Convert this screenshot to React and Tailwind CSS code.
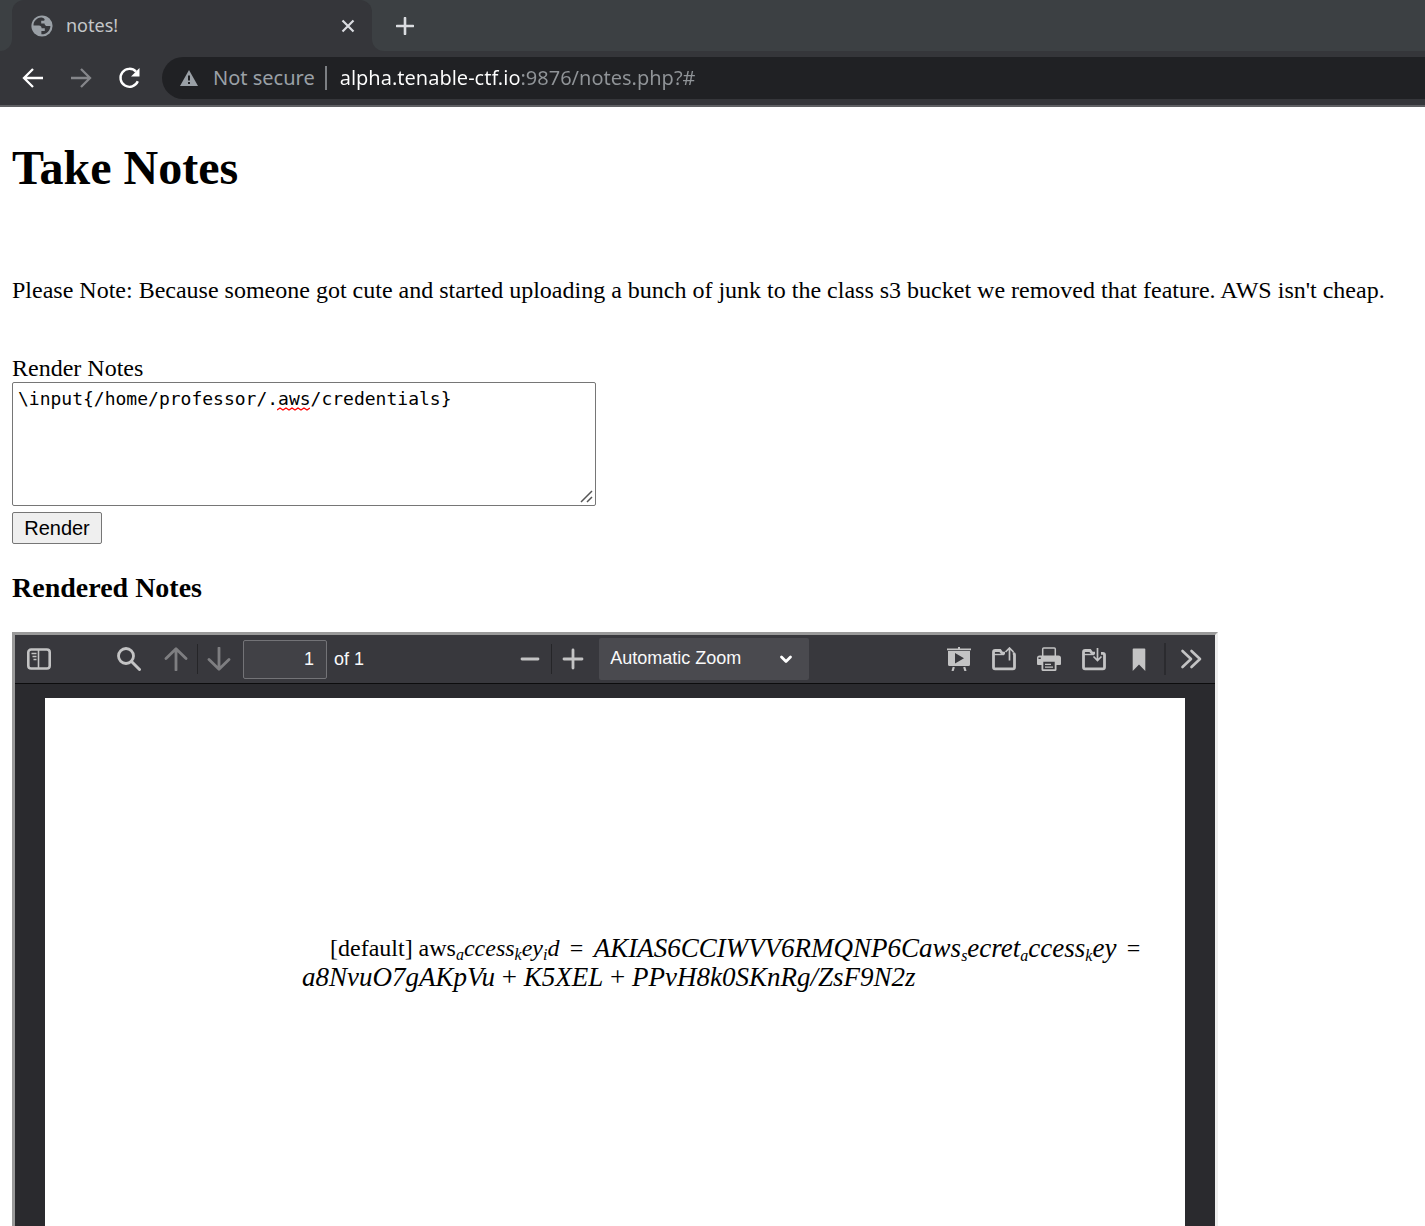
import React from "react";

const Svg = ({ size = 24, box = "0 0 24 24", className = "", children }) => (
  <svg width={size} height={size} viewBox={box} fill="none" className={className} aria-hidden="true">
    {children}
  </svg>
);

function TabStrip() {
  return (
    <div className="flex h-[51px] bg-[#3c4043]">
      <div className="w-3 bg-[#35363a]">
        <div className="h-full rounded-br-xl bg-[#3c4043]" />
      </div>
      <div className="flex w-[360px] items-center rounded-t-xl bg-[#35363a] pr-3 pl-[19px]">
        <Svg size={22} box="0 0 22 22">
          <circle cx="11" cy="11" r="10.6" fill="#9aa0a6" />
          <path
            d="M10 2.6C5.400 3 2.500 6.600 2.500 10.600L8 10.600c1.500 0 2.600 1.100 2.600 2.600h3.200v2.700h-3.400v3.400c4.800.2 8.900-3.400 9-8.300h-3.200c-1.500 0-2.700-1.100-2.700-2.600h-3.300V5.700h2.600c.8 0 1.100-1.200.6-1.700-.7-.8-2-1.400-3.400-1.400Z"
            fill="#35363a"
          />
          <path d="M3.400 12.500c.5 3 2.600 5.300 5.300 6.300v-2.700c-1.400 0-2.500-.9-2.500-2.200Z" fill="#9aa0a6" />
        </Svg>
        <span className="ml-[13px] flex-1 pb-[2px] text-lg text-[#c4c7c9]">notes!</span>
        <button aria-label="Close tab" className="flex h-6 w-6 items-center justify-center">
          <Svg size={14} box="0 0 14 14">
            <path d="M1.500 1.500 12.500 12.500M12.500 1.500 1.500 12.500" stroke="#dadce0" strokeWidth="2.200" />
          </Svg>
        </button>
      </div>
      <div className="flex flex-1 bg-[#35363a]">
        <div className="flex flex-1 items-center rounded-bl-xl bg-[#3c4043] pl-[21px]">
          <button aria-label="New tab" className="flex h-6 w-6 items-center justify-center">
            <Svg size={18} box="0 0 18 18">
              <path d="M9 1v16M1 9h16" stroke="#dadce0" strokeWidth="2.600" strokeLinecap="round" />
            </Svg>
          </button>
        </div>
      </div>
    </div>
  );
}

function AddressBar() {
  return (
    <div className="flex h-14 items-center border-b-2 border-[#5f6063] bg-[#35363a] pl-[21px]">
      <button aria-label="Back" className="flex h-6 w-6 items-center justify-center">
        <Svg>
          <path d="M22 12H3.500M12 3 3 12l9 9" stroke="#fff" strokeWidth="2.300" />
        </Svg>
      </button>
      <button aria-label="Forward" className="ml-6 flex h-6 w-6 items-center justify-center">
        <Svg>
          <path d="M2 12h18.500M12 3l9 9-9 9" stroke="#85868a" strokeWidth="2.300" />
        </Svg>
      </button>
      <button aria-label="Reload" className="ml-6 flex h-6 w-6 items-center justify-center">
        <Svg>
          <path d="M20.800 15.300a9 9 0 1 1-1.800-9.700" stroke="#fff" strokeWidth="2.400" />
          <path d="M22.500 2v8.500H14Z" fill="#fff" />
        </Svg>
      </button>
      <div className="ml-[21px] flex h-[42px] flex-1 items-center rounded-l-full bg-[#202124] pl-[18px]">
        <Svg size={18} box="0 0 18 18">
          <path d="M9 1 18 17H0Z" fill="#9aa0a6" />
          <path d="M8 6.500h2v5H8ZM8 13h2v2H8Z" fill="#202124" />
        </Svg>
        <span className="ml-[15px] text-xl text-[#9aa0a6]">Not secure</span>
        <span className="ml-[10px] h-6 w-[2px] bg-[#7c7f83]" />
        <input
          aria-label="Address"
          defaultValue="alpha.tenable-ctf.io:9876/notes.php?#"
          spellCheck={false}
          className="ml-[13px] min-w-0 flex-1 bg-[linear-gradient(90deg,#fff_180px,#909498_180px)] bg-clip-text text-xl text-transparent outline-none"
        />
      </div>
    </div>
  );
}

function ToolButton({ label, className = "", children }) {
  return (
    <button aria-label={label} className={`flex h-[42px] w-[42px] shrink-0 items-center justify-center text-[#c3c3c4] ${className}`}>
      <Svg>{children}</Svg>
    </button>
  );
}

function ViewerToolbar() {
  return (
    <div className="flex h-[49px] items-center justify-between border-b border-[#0c0c0d] bg-[#38383d] px-[3px] font-['Liberation_Sans',sans-serif] text-lg text-[#f9f9fa]">
      <div className="flex items-center pr-4">
        <ToolButton label="Toggle sidebar">
          <rect x="1.300" y="2.500" width="21.400" height="19" rx="2.800" stroke="currentColor" strokeWidth="2.600" />
          <path d="M11.500 3v18" stroke="currentColor" strokeWidth="1.600" />
          <path d="M4.500 6.500h5M5.500 9.500h4M6.500 12.500h3" stroke="currentColor" strokeWidth="1.300" />
        </ToolButton>
        <ToolButton label="Find" className="ml-12">
          <circle cx="9" cy="9" r="7.500" stroke="currentColor" strokeWidth="2.800" />
          <path d="m14.500 14.500 8 8" stroke="currentColor" strokeWidth="3" strokeLinecap="round" />
        </ToolButton>
        <ToolButton label="Previous page" className="ml-[5px] opacity-50">
          <path d="M12 23V2M2 11.500 12 1.700l10 9.800" stroke="currentColor" strokeWidth="2.800" strokeLinecap="round" strokeLinejoin="round" />
        </ToolButton>
        <span className="h-[30px] w-px bg-[#252528]" />
        <ToolButton label="Next page" className="opacity-50">
          <path d="M12 1v21M2 12.500l10 9.800 10-9.800" stroke="currentColor" strokeWidth="2.800" strokeLinecap="round" strokeLinejoin="round" />
        </ToolButton>
        <input
          id="page-number"
          aria-label="Page"
          defaultValue="1"
          className="ml-[3px] h-[39px] w-[84px] rounded-xs border border-[#737377] bg-[#414146] pr-3 text-right outline-none"
        />
        <label htmlFor="page-number" className="ml-[7px] pb-px">of 1</label>
      </div>

      <div className="flex items-center">
        <ToolButton label="Zoom out">
          <path d="M4 12h16" stroke="currentColor" strokeWidth="2.800" strokeLinecap="round" />
        </ToolButton>
        <span className="h-[30px] w-px bg-[#252528]" />
        <ToolButton label="Zoom in">
          <path d="M12 3v18M3 12h18" stroke="currentColor" strokeWidth="2.800" strokeLinecap="round" />
        </ToolButton>
        <div className="relative ml-[5px]">
          <select aria-label="Zoom" className="block h-[42px] w-[210px] appearance-none rounded-xs bg-[#4a4a4f] pr-10 pb-[2px] pl-[11px] outline-none">
            <option>Automatic Zoom</option>
          </select>
          <Svg size={14} box="0 0 14 14" className="pointer-events-none absolute top-[14px] right-4">
            <path d="m2.500 5 4.500 4.500L11.500 5" stroke="#fff" strokeWidth="2.800" strokeLinecap="round" strokeLinejoin="round" />
          </Svg>
        </div>
      </div>

      <div className="flex items-center gap-[3px]">
        <ToolButton label="Presentation mode">
          <path fill="currentColor" d="M11 0h2v1.500h11V4h-1v13.500q0 1.500-1.500 1.500h-19Q1 19 1 17.500V4H0V1.500h11Z" />
          <path fill="#38383d" d="M0 3.200h24v.9H0ZM8 6v10.500l9-5.300Z" />
          <path d="m6.800 20-1.300 4M17.200 20l1.300 4" stroke="currentColor" strokeWidth="2.200" />
        </ToolButton>
        <ToolButton label="Open file">
          <path d="M13 6.200h-3L8 3.500H3.200q-1.700 0-1.700 1.700v15q0 1.600 1.700 1.600h17.600q1.700 0 1.700-1.600V8q0-1.700-1.700-1.700H21" stroke="currentColor" strokeWidth="2.800" />
          <path d="M2 7.500h10" stroke="currentColor" strokeWidth="1.400" />
          <path d="M17.500 13.500V1.500M13.500 5l4-4 4 4" stroke="currentColor" strokeWidth="1.700" />
        </ToolButton>
        <ToolButton label="Print">
          <path fill="currentColor" d="M2.500 8.500h19Q24 8.500 24 11v6q0 1-1 1h-3.500v4.500q0 1.500-1.500 1.500H6q-1.500 0-1.500-1.500V18H1q-1 0-1-1v-6q0-2.500 2.500-2.500Z" />
          <path d="M5.700 9V2q0-1 1-1h10.600q1 0 1 1v7" stroke="currentColor" strokeWidth="1.500" />
          <path fill="#38383d" d="M1.500 10.500h2.300V12H1.500ZM6.300 14.700h11.400v7.600H6.300Z" />
          <path d="M8 17.300h6M8 20.200h8" stroke="currentColor" strokeWidth="1.300" />
        </ToolButton>
        <ToolButton label="Save">
          <path d="M13 6.200h-3L8 3.500H3.200q-1.700 0-1.700 1.700v15q0 1.600 1.700 1.600h17.600q1.700 0 1.700-1.600V8q0-1.700-1.700-1.700H19" stroke="currentColor" strokeWidth="2.800" />
          <path d="M2 7.500h10" stroke="currentColor" strokeWidth="1.400" />
          <path d="M15.500 1v12M11.500 9.500l4 4 4-4" stroke="currentColor" strokeWidth="1.700" />
        </ToolButton>
        <ToolButton label="Bookmark">
          <path fill="currentColor" d="M6.500 1.500h11q.8 0 .8.8V24L12 17.500 5.700 24V2.300q0-.8.8-.8Z" />
        </ToolButton>
        <span className="mx-px h-8 w-[2px] bg-[#2b2b2f]" />
        <ToolButton label="Tools">
          <path d="m3.500 4 8.500 8-8.500 8M12.500 4l8.500 8-8.500 8" stroke="currentColor" strokeWidth="2.600" strokeLinecap="round" strokeLinejoin="round" />
        </ToolButton>
      </div>
    </div>
  );
}

const Sub = ({ children }) => <span className="relative top-1 text-base">{children}</span>;

function Viewer() {
  return (
    <section className="flex w-[86.1%] flex-1 flex-col border-3 border-b-0 border-t-[#9a9a9a] border-r-[#eeeeee] border-l-[#9a9a9a]">
      <ViewerToolbar />
      <div className="flex flex-1 bg-[#2a2a2e] px-[30px] pt-[14px]">
        <div className="flex-1 bg-white pt-[237px] pr-[45px] pl-[257px] text-2xl leading-[27px]">
          <p className="flex justify-between pl-7 whitespace-nowrap">
            <span>[default] aws<i><Sub>a</Sub>ccess<Sub>k</Sub>ey<Sub>i</Sub>d</i></span>
            <span>=</span>
            <i className="text-[27px]">AKIAS6CCIWVV6RMQNP6Caws<Sub>s</Sub>ecret<Sub>a</Sub>ccess<Sub>k</Sub>ey</i>
            <span>=</span>
          </p>
          <p className="text-[27px] whitespace-nowrap">
            <i>a8NvuO7gAKpVu</i> + <i>K5XEL</i> + <i>PPvH8k0SKnRg/ZsF9N2z</i>
          </p>
        </div>
      </div>
    </section>
  );
}

export default function App() {
  return (
    <div className="flex min-h-screen flex-col bg-white font-['Liberation_Serif',serif] text-black">
      <header className="font-['Noto_Sans','Open_Sans',sans-serif]">
        <TabStrip />
        <AddressBar />
      </header>
      <main className="flex flex-1 flex-col items-start px-3 pt-[33px] text-2xl leading-7">
        <h1 className="text-5xl leading-[56px] font-bold">Take Notes</h1>
        <p className="mt-20">
          Please Note: Because someone got cute and started uploading a bunch of junk to the class s3 bucket we removed that feature. AWS isn't cheap.
        </p>
        <form className="mt-[50px] flex flex-col items-start" onSubmit={(e) => e.preventDefault()}>
          <label htmlFor="notes">Render Notes</label>
          <div className="relative">
            <textarea
              id="notes"
              defaultValue="\input{/home/professor/.aws/credentials}"
              spellCheck={false}
              className="block h-[124px] w-[584px] resize-none rounded-xs border border-[#767676] px-[5px] py-1 font-['DejaVu_Sans_Mono',monospace] text-lg leading-6 outline-none"
            />
            <svg width="33" height="4" viewBox="0 0 33 4" fill="none" className="pointer-events-none absolute top-[25px] left-[265px]" aria-hidden="true">
              <path d="M0 3 3 1l3 2 3-2 3 2 3-2 3 2 3-2 3 2 3-2 3 2 3-2" stroke="#f00" strokeWidth="1.400" />
            </svg>
            <Svg size={14} box="0 0 14 14" className="pointer-events-none absolute right-[2px] bottom-[2px]">
              <path d="M1 12 12 1M7 12l5-5" stroke="#555" strokeWidth="1.500" />
            </Svg>
          </div>
          <button className="mt-[6px] h-8 w-[90px] rounded-xs border border-[#767676] bg-[#efefef] font-['Liberation_Sans',sans-serif] text-xl leading-6">
            Render
          </button>
        </form>
        <h3 className="mt-[28px] mb-[28px] text-[28px] leading-8 font-bold">Rendered Notes</h3>
        <Viewer />
      </main>
    </div>
  );
}
